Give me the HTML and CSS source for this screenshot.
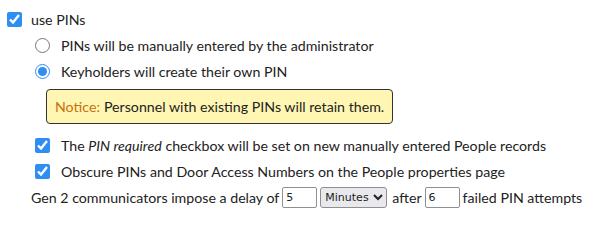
FILE: index.html
```html
<!DOCTYPE html>
<html>
<head>
<meta charset="utf-8">
<link rel="stylesheet" href="styles.css">
</head>
<body>
<div class="form">
  <label class="row">
    <input type="checkbox" class="box" checked>
    <span>use PINs</span>
  </label>
  <div class="nested">
    <label class="row">
      <input type="radio" name="pinmode" class="box radio">
      <span>PINs will be manually entered by the administrator</span>
    </label>
    <label class="row">
      <input type="radio" name="pinmode" class="box radio" checked>
      <span>Keyholders will create their own PIN</span>
    </label>
    <div class="notice"><span class="notice-label">Notice:</span> Personnel with existing PINs will retain them.</div>
    <label class="row">
      <input type="checkbox" class="box sub" checked>
      <span>The <em>PIN required</em> checkbox will be set on new manually entered People records</span>
    </label>
    <label class="row">
      <input type="checkbox" class="box sub" checked>
      <span>Obscure PINs and Door Access Numbers on the People properties page</span>
    </label>
  </div>
  <div class="row delay">
    <span>Gen 2 communicators impose a delay of</span>
    <input type="text" class="num" value="5">
    <select class="unit">
      <option>Minutes</option>
      <option>Seconds</option>
    </select>
    <span>after</span>
    <input type="text" class="num" value="6">
    <span>failed PIN attempts</span>
  </div>
</div>
</body>
</html>
```
FILE: styles.css
```css
body {
  margin: 0;
  font-family: Lato, "Open Sans", sans-serif;
  font-size: 14.2px;
  color: #222;
  background: #fff;
  white-space: nowrap;
}
.form {
  padding: 6px 0 0 7px;
}
.row {
  display: flex;
  align-items: center;
  height: 26px;
}
.box {
  width: 15px;
  height: 15px;
  margin: 0 9px 0 0;
  flex: none;
  accent-color: #2f8ef2;
}
.nested {
  padding-left: 28px;
}
.radio, .sub {
  margin-right: 11px;
}
.notice {
  margin: 5px 0 8px 11px;
  width: fit-content;
  height: 33px;
  display: flex;
  align-items: center;
  padding: 0 8px;
  background: #fff6b3;
  border: 1px solid #333;
  border-radius: 4px;
}
.notice-label {
  color: #c7700c;
  margin-right: 4px;
}
.delay {
  padding-left: 24px;
}
.num {
  box-sizing: border-box;
  width: 35px;
  height: 21px;
  margin: 0 3px 0 3px;
  padding: 1px 3px;
  font-family: "DejaVu Sans", sans-serif;
  font-size: 11px;
  color: #222;
  border: 1px solid #8f8f8f;
  border-radius: 2px;
  flex: none;
}
.unit {
  box-sizing: border-box;
  width: 67px;
  height: 21px;
  margin: 0 5px 0 0;
  font-family: "DejaVu Sans", sans-serif;
  font-size: 11px;
  color: #222;
  background: #e9e9ed;
  border: 1px solid #8f8f8f;
  border-radius: 3px;
  flex: none;
}
```
